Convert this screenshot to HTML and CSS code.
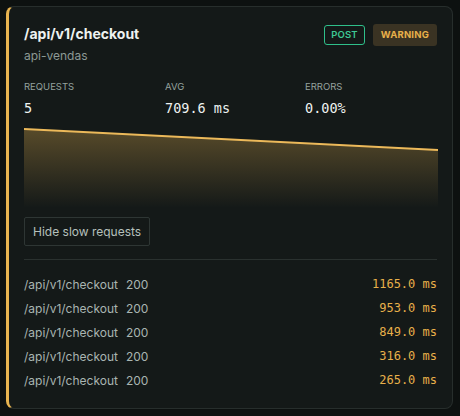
FILE: index.html
```html
<!DOCTYPE html>
<html lang="en">
<head>
	<meta charset="utf-8">
	<link rel="stylesheet" href="styles.css">
</head>
<body>

	<div class="card">

		<div class="head">
			<div>
				<div class="title">/api/v1/checkout</div>
				<div class="service">api-vendas</div>
			</div>
			<div class="badges">
				<span class="badge post">POST</span>
				<span class="badge warn">WARNING</span>
			</div>
		</div>

		<div class="stats">
			<div>
				<div class="label">REQUESTS</div>
				<div class="value">5</div>
			</div>
			<div>
				<div class="label">AVG</div>
				<div class="value">709.6 ms</div>
			</div>
			<div>
				<div class="label">ERRORS</div>
				<div class="value">0.00%</div>
			</div>
		</div>

		<svg class="chart" viewBox="0 0 414 80" preserveAspectRatio="none">
			<defs>
				<linearGradient id="fill" x1="0" y1="0" x2="0" y2="1">
					<stop offset="0" stop-color="#e8b450" stop-opacity="0.32"/>
					<stop offset="1" stop-color="#e8b450" stop-opacity="0"/>
				</linearGradient>
			</defs>
			<polygon points="0,1 414,22 414,80 0,80" fill="url(#fill)"/>
			<polyline points="0,1 414,22" fill="none" stroke="#ecb95a" stroke-width="2"/>
		</svg>

		<button class="toggle" type="button">Hide slow requests</button>

		<div class="list">
			<div class="row"><span>/api/v1/checkout</span><span>200</span><span class="ms">1165.0 ms</span></div>
			<div class="row"><span>/api/v1/checkout</span><span>200</span><span class="ms">953.0 ms</span></div>
			<div class="row"><span>/api/v1/checkout</span><span>200</span><span class="ms">849.0 ms</span></div>
			<div class="row"><span>/api/v1/checkout</span><span>200</span><span class="ms">316.0 ms</span></div>
			<div class="row"><span>/api/v1/checkout</span><span>200</span><span class="ms">265.0 ms</span></div>
		</div>

	</div>

</body>
</html>
```

FILE: styles.css
```css
body { margin:0; background:#0d1110; font-family:Inter, "Noto Sans", sans-serif; padding:6px 7px 6px 6px; }

.card { background:#141918; border:1px solid #272e2c; border-left:3px solid #e8b450; border-radius:8px; padding:17px 15px 16px 15px; height:368px; }

.head { display:flex; justify-content:space-between; align-items:flex-start; }
.title { color:#eef2f0; font-weight:700; font-size:14px; line-height:20px; }
.service { color:#8c9995; font-size:12px; line-height:18px; margin-top:3px; }

.badges { display:flex; gap:8px; margin-top:1px; }
.badge { font-size:9.5px; font-weight:600; letter-spacing:0.2px; padding:0 6px; border-radius:3px; }
.badge.post { color:#3ec994; border:1px solid #2fbf8a; line-height:18px; height:18px; }
.badge.warn { color:#e8b04a; background:#3a3323; font-weight:700; height:22px; line-height:22px; margin-top:-1px; padding:0 8px; }

.stats { display:grid; grid-template-columns:141px 140px 1fr; margin-top:15px; }
.label { color:#95a29e; font-size:9.5px; line-height:14px; }
.value { color:#eef2f0; font-family:"DejaVu Sans Mono", monospace; font-size:13.5px; line-height:18px; margin-top:5px; }

.chart { display:block; width:414px; height:80px; margin-top:11px; }

.toggle { display:block; margin-top:9px; background:#141918; border:1px solid #2e3634; color:#b5c0bc; font-family:Inter, "Noto Sans", sans-serif; font-size:12px; height:29px; padding:0 8px; border-radius:2px; }

.list { border-top:1px solid #2a312f; margin-top:13px; padding-top:12px; }
.row { display:flex; gap:8px; height:24px; line-height:25px; color:#a9b5b1; font-size:12px; }
.row .ms { margin-left:auto; color:#e8b04a; font-family:"DejaVu Sans Mono", monospace; font-size:12px; }
```
